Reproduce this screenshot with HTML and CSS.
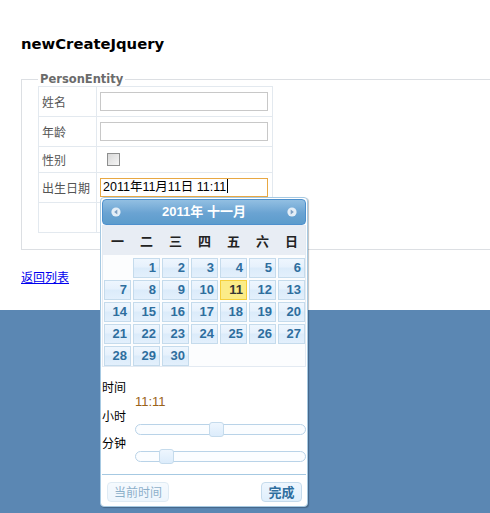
FILE: index.html
```html
<!DOCTYPE html>
<html>
<head>
<meta charset="utf-8">
<title>newCreateJquery</title>
<link rel="stylesheet" href="styles.css">
</head>
<body>
<div class="page">
  <h2 class="title">newCreateJquery</h2>
  <fieldset class="entity">
    <legend>PersonEntity</legend>
    <table class="form">
      <tr class="r30"><td class="lbl">姓名</td><td class="fld"><input class="txt" type="text"></td></tr>
      <tr class="r30"><td class="lbl">年龄</td><td class="fld"><input class="txt" type="text"></td></tr>
      <tr class="r26"><td class="lbl">性别</td><td class="fld"><input class="chk" type="checkbox"></td></tr>
      <tr class="r30"><td class="lbl">出生日期</td><td class="fld"><div class="txt date">2011年11月11日 11:11<span class="caret"></span></div></td></tr>
      <tr class="r30"><td class="lbl"></td><td class="fld"></td></tr>
    </table>
  </fieldset>
  <a class="back" href="#">返回列表</a>
</div>
<div class="band"></div>

<div class="picker">
  <div class="dp-head">
    <svg class="nav" width="10" height="10" viewBox="0 0 10 10"><circle cx="5" cy="5" r="4.6" fill="#e4eef7"/><polygon points="6.3,2.6 3.2,5 6.3,7.4" fill="#7e9fc2"/></svg>
    <span class="dp-title">2011年 十一月</span>
    <svg class="nav" width="10" height="10" viewBox="0 0 10 10"><circle cx="5" cy="5" r="4.6" fill="#e4eef7"/><polygon points="3.7,2.6 6.8,5 3.7,7.4" fill="#7e9fc2"/></svg>
  </div>
  <div class="dp-cal">
    <div class="dp-names">
      <span>一</span><span>二</span><span>三</span><span>四</span><span>五</span><span>六</span><span>日</span>
    </div>
    <div class="dp-grid">
      <span class="empty"></span><span class="d">1</span><span class="d">2</span><span class="d">3</span><span class="d">4</span><span class="d">5</span><span class="d">6</span>
      <span class="d">7</span><span class="d">8</span><span class="d">9</span><span class="d">10</span><span class="d today">11</span><span class="d">12</span><span class="d">13</span>
      <span class="d">14</span><span class="d">15</span><span class="d">16</span><span class="d">17</span><span class="d">18</span><span class="d">19</span><span class="d">20</span>
      <span class="d">21</span><span class="d">22</span><span class="d">23</span><span class="d">24</span><span class="d">25</span><span class="d">26</span><span class="d">27</span>
      <span class="d">28</span><span class="d">29</span><span class="d">30</span>
    </div>
  </div>
  <div class="dp-time">
    <div class="t-lbl first">时间</div>
    <div class="t-val">11:11</div>
    <div class="t-lbl">小时</div>
    <div class="slider"><span class="handle" style="left:47.8%"></span></div>
    <div class="t-lbl gap">分钟</div>
    <div class="slider"><span class="handle" style="left:18.6%"></span></div>
  </div>
  <div class="dp-sep"></div>
  <div class="dp-btns">
    <span class="btn off">当前时间</span>
    <span class="btn main">完成</span>
  </div>
</div>
</body>
</html>
```
FILE: styles.css
```css
html, body {
  margin: 0;
  padding: 0;
  overflow: hidden;
}
body {
  width: 490px;
  height: 513px;
  background: #fff;
  position: relative;
  font-family: "DejaVu Sans", "Noto Sans CJK SC", sans-serif;
}
.page {
  height: 310px;
  box-sizing: border-box;
  padding: 35px 0 0 21px;
}
.title {
  margin: 0;
  font-size: 14.8px;
  line-height: 18px;
  font-weight: bold;
  color: #000;
}
.entity {
  margin: 19px 0 0 0;
  padding: 0 16px 16px 16px;
  border: 1px solid #dcdfe3;
  border-right: none;
  width: 469px;
  box-sizing: border-box;
}
.entity legend {
  padding: 0 2px;
  font-size: 11.5px;
  line-height: 14px;
  font-weight: bold;
  color: #6b6b6b;
}
.form {
  border-collapse: collapse;
  border: 1px solid #e3e9ef;
}
.form td {
  border: 1px solid #e3e9ef;
  padding: 0;
  vertical-align: middle;
}
.form .r30 td { height: 29px; }
.form .r26 td { height: 25px; }
.lbl {
  width: 54px;
  padding-left: 3px !important;
  font-family: "Noto Sans CJK SC", sans-serif;
  font-size: 12px;
  color: #555;
}
.fld {
  width: 172px;
  padding-left: 3px !important;
}
.txt {
  display: block;
  width: 168px;
  height: 19px;
  box-sizing: border-box;
  margin: 0;
  padding: 0 2px;
  border: 1px solid #c8c8c8;
  background: #fff;
  font-family: "Liberation Sans", "Noto Sans CJK SC", sans-serif;
  font-size: 12px;
  outline: none;
}
.date {
  border-color: #e8a843;
  font-size: 12.5px;
  line-height: 17px;
  color: #000;
  white-space: nowrap;
}
.caret {
  display: inline-block;
  width: 1px;
  height: 14px;
  background: #000;
  vertical-align: -2px;
  margin-left: 1px;
}
.chk {
  appearance: none;
  -webkit-appearance: none;
  display: block;
  margin: 0 0 0 7px;
  width: 13px;
  height: 13px;
  box-sizing: border-box;
  border: 1px solid #8e8f8f;
  background: linear-gradient(135deg, #d8d8d8, #f6f6f6);
}
.back {
  display: inline-block;
  margin-top: 19px;
  font-family: "Noto Sans CJK SC", sans-serif;
  font-size: 12px;
  line-height: 16px;
  color: #0000ee;
  text-decoration: underline;
}
.band {
  height: 203px;
  background: #5b87b3;
}

/* date picker overlay */
.picker {
  position: absolute;
  left: 100px;
  top: 197px;
  width: 204px;
  padding: 1px;
  border: 1px solid #a6c9e2;
  border-radius: 4px;
  background: #fff;
  box-shadow: 1px 1px 1px rgba(0, 0, 0, 0.25);
  font-family: "Liberation Sans", "Noto Sans CJK SC", sans-serif;
}
.dp-head {
  height: 24px;
  border: 1px solid #4d90cd;
  border-radius: 4px;
  background: linear-gradient(#92bfe2, #6aa3d2 55%, #5c9ccc);
  display: flex;
  align-items: center;
  justify-content: space-between;
  padding: 0 8px;
}
.nav { display: block; }
.dp-title {
  color: #fff;
  font-weight: bold;
  font-size: 13px;
  line-height: 24px;
}
.dp-cal {
  border: 1px solid #e3eaf2;
  border-top: none;
  background: #fcfdfe;
}
.dp-names {
  height: 30px;
  background: #e8edf4;
  display: grid;
  grid-template-columns: repeat(7, 27px);
  column-gap: 2px;
  padding-left: 1px;
  align-items: center;
}
.dp-names span {
  text-align: center;
  font-family: "Noto Sans CJK SC", sans-serif;
  font-weight: bold;
  font-size: 13px;
  color: #222;
}
.dp-grid {
  display: grid;
  grid-template-columns: repeat(7, 27px);
  grid-auto-rows: 20px;
  gap: 2px;
  padding: 3px 0 0 1px;
}
.d {
  box-sizing: border-box;
  border: 1px solid #c5dbec;
  background: linear-gradient(#eef6fe 0%, #e6f1fc 45%, #dbebfa 50%, #e3f0fc 100%);
  color: #2e6e9e;
  font-weight: bold;
  font-size: 13px;
  line-height: 18px;
  text-align: right;
  padding-right: 3px;
}
.d.today {
  border-color: #f5cf3a;
  background: #fbec88;
  color: #363636;
}
.dp-time {
  font-family: "Noto Sans CJK SC", sans-serif;
  font-size: 12px;
  color: #000;
}
.t-lbl {
  height: 14px;
  line-height: 14px;
}
.t-lbl.first {
  margin-top: 12px;
  height: 16px;
  line-height: 16px;
}
.t-lbl.gap { margin-top: 1px; }
.t-val {
  margin-left: 33px;
  height: 14px;
  line-height: 14px;
  font-family: "Liberation Sans", sans-serif;
  font-size: 13px;
  color: #9a6318;
}
.slider {
  position: relative;
  margin: 1px 0 0 33px;
  width: 171px;
  height: 11px;
  box-sizing: border-box;
  border: 1px solid #b9d3e8;
  border-radius: 6px;
  background: #fbfdff;
}
.handle {
  position: absolute;
  top: -3px;
  margin-left: -8px;
  width: 15px;
  height: 15px;
  box-sizing: border-box;
  border: 1px solid #c5dbec;
  border-radius: 3px;
  background: linear-gradient(#eef6fe, #dcecfb);
}
.dp-sep {
  margin-top: 12px;
  height: 1px;
  background: #a6c9e2;
}
.dp-btns {
  margin-top: 7px;
  padding: 0 4px 3px 5px;
  display: flex;
  justify-content: space-between;
}
.btn {
  height: 20px;
  box-sizing: border-box;
  border: 1px solid #c5dbec;
  border-radius: 4px;
  background: linear-gradient(#eef6fe, #dfeffc);
  color: #2e6e9e;
  font-family: "Noto Sans CJK SC", sans-serif;
  font-size: 12px;
  line-height: 18px;
  text-align: center;
}
.btn.off {
  width: 62px;
  opacity: 0.55;
}
.btn.main {
  width: 41px;
  font-weight: bold;
  font-size: 13px;
}
```
